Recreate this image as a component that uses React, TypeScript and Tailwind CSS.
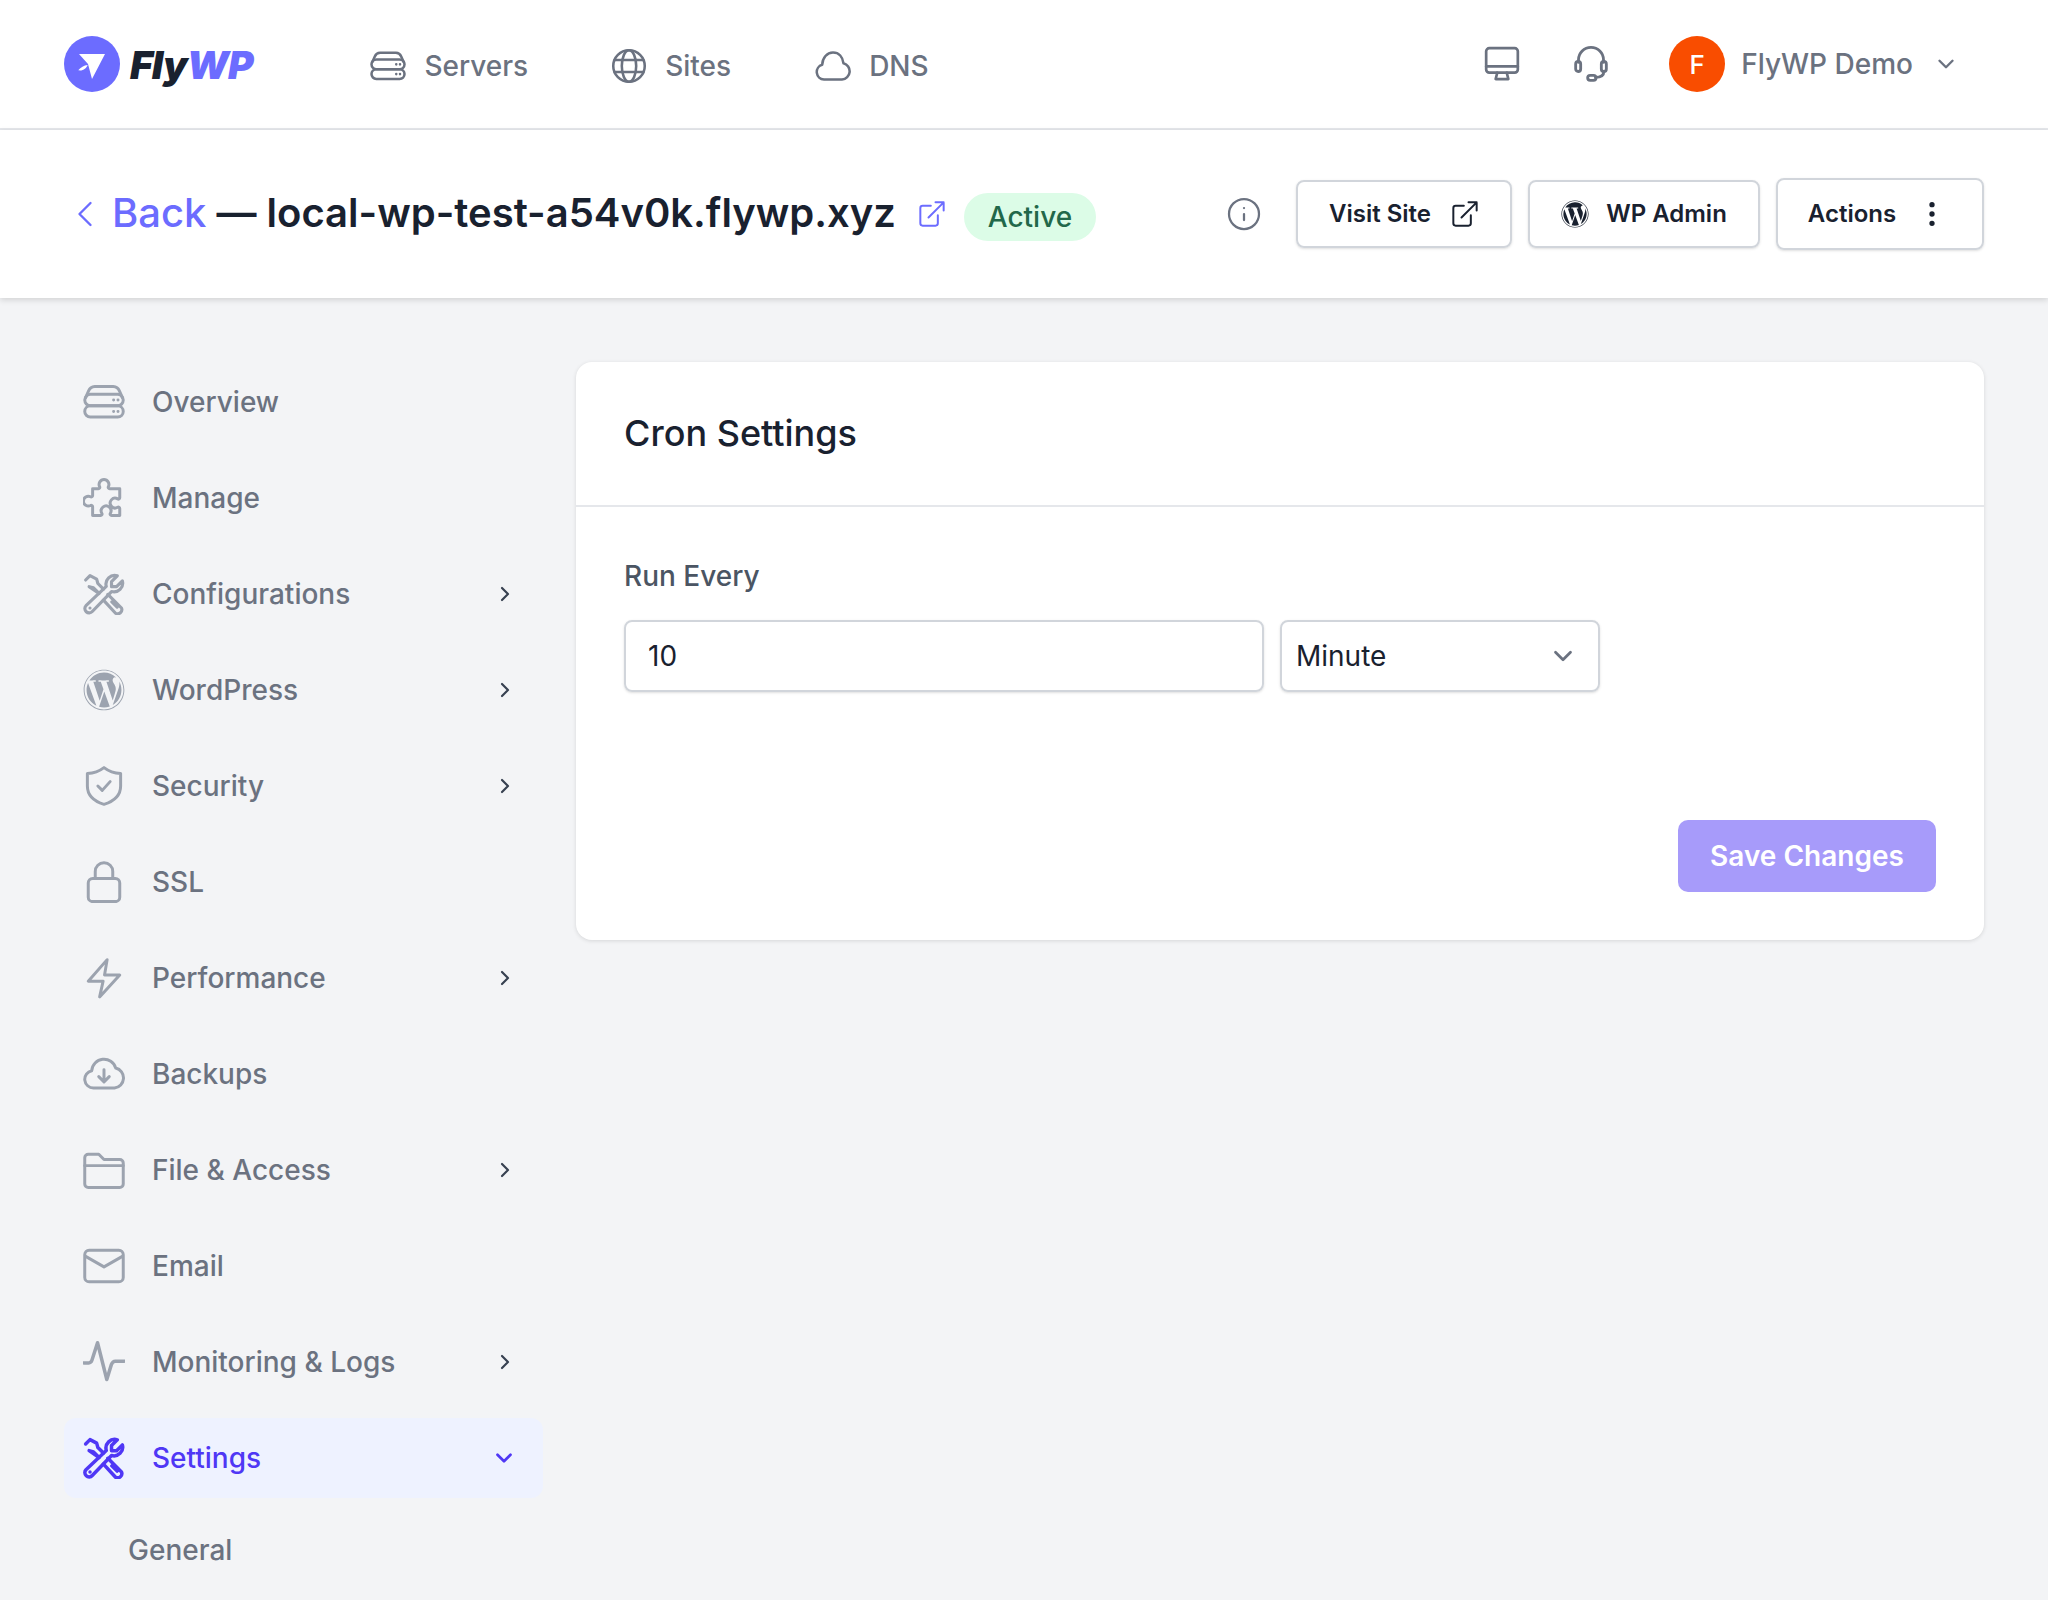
import {
  ChevronDown,
  ChevronLeft,
  ChevronRight,
  EllipsisVertical,
  Info,
} from "lucide-react";
import { FaWordpress } from "react-icons/fa";
import type { ReactNode } from "react";

function Icon({ className, children, sw = 1.7 }: { className?: string; children: ReactNode; sw?: number }) {
  return (
    <svg
      viewBox="0 0 24 24"
      fill="none"
      stroke="currentColor"
      strokeWidth={sw}
      strokeLinecap="round"
      strokeLinejoin="round"
      className={className}
    >
      {children}
    </svg>
  );
}

const ServerIcon = ({ className }: { className?: string }) => (
  <Icon className={className}>
    <path d="M1.500 9.500 3.200 5.600A4 4 0 0 1 6.700 3.200h10.600a4 4 0 0 1 3.500 2.400L22.500 9.500" />
    <rect x="1" y="7.600" width="22" height="6.600" rx="3.300" />
    <rect x="1" y="14.200" width="22" height="6.400" rx="3.200" />
    <path d="M17.500 10.900h.01M20 10.900h.01M17.500 17.400h.01M20 17.400h.01" />
  </Icon>
);
const GlobeIcon = ({ className }: { className?: string }) => (
  <Icon className={className}>
    <circle cx="12" cy="12" r="10.500" />
    <ellipse cx="12" cy="12" rx="4.800" ry="10.500" />
    <path d="M2.500 8h19M2.500 16h19" />
  </Icon>
);
const CloudIcon = ({ className }: { className?: string }) => (
  <Icon className={className}>
    <path d="M6 21a5 5 0 0 1-1.200-9.800C5 6.500 8 3 12 3s6.500 3 7 7.200A5.500 5.500 0 0 1 18 21Z" />
  </Icon>
);
const MonitorIcon = ({ className }: { className?: string }) => (
  <Icon className={className}>
    <rect x="2" y="2" width="20" height="15.500" rx="2" />
    <path d="M2 13.500h20M9 17.500 8 21.500h8l-1-4" />
  </Icon>
);
const HeadsetIcon = ({ className }: { className?: string }) => (
  <Icon className={className}>
    <path d="M4.500 11V9.500a7.500 7.500 0 0 1 15 0V11" />
    <rect x="2.800" y="10.500" width="3" height="6" rx="1.500" />
    <rect x="18.200" y="10.500" width="3" height="6" rx="1.500" />
    <path d="M19.700 16.500c0 2.500-2 3.500-5 3.500" />
    <rect x="10" y="18.800" width="5" height="3" rx="1.500" />
  </Icon>
);
const PuzzleIcon = ({ className }: { className?: string }) => (
  <Icon className={className}>
    <path d="M9.500 5.500a2.800 2.800 0 1 1 5 0c-.3.600.1 1.200.7 1.200H21v5.200c0 .600-.7 1-1.200.600a2.800 2.800 0 1 0 0 4.800c.5-.3 1.200 0 1.200.7v4h-4.700c-.6 0-1-.7-.7-1.200a2.800 2.800 0 1 0-4.800 0c.3.500-.1 1.200-.7 1.200H5.500v-5c0-.6-.7-1-1.200-.7a2.800 2.800 0 1 1 0-5c.5.300 1.200-.1 1.200-.7V6.700h3.300c.6 0 1-.6.700-1.200Z" />
  </Icon>
);
const ToolsIcon = ({ className, sw = 1.8 }: { className?: string; sw?: number }) => (
  <Icon className={className} sw={sw}>
    <path d="M1.700 18.700 13.300 7.700A5 5 0 0 1 19.600 1.600L16.300 4.900V7.800H19.200L22.500 4.500A5 5 0 0 1 16.300 10.600L5.300 22A2.400 2.400 0 0 1 1.700 18.700Z" />
    <path d="M1.500 4 4 1.500 7.800 3.500 8.500 6l3.200 3.200M9.200 11.700 6 8.500 3.500 7.800Z" />
    <path d="M14.200 12.200 22 20a2.400 2.400 0 0 1-3.400 3L11.700 15.500M16.500 16.500l3 3" />
    <path d="M4 20h.01" />
  </Icon>
);
const ShieldIcon = ({ className }: { className?: string }) => (
  <Icon className={className}>
    <path d="M12 1.500c3 2.300 6 3.200 9.500 3.400V12c0 5.500-4 8.800-9.500 10.500C6.500 20.800 2.500 17.500 2.500 12V4.900C6 4.700 9 3.800 12 1.500Z" />
    <path d="m8.500 12 2.500 2.500 4.500-5" />
  </Icon>
);
const LockIcon = ({ className }: { className?: string }) => (
  <Icon className={className}>
    <rect x="3" y="10" width="18" height="13.200" rx="2.500" />
    <path d="M7 10V6a5 5 0 0 1 10 0v4" />
  </Icon>
);
const BoltIcon = ({ className }: { className?: string }) => (
  <Icon className={className}>
    <path d="M13.800 1.500 3 13.800h8.500l-2 9L21 10.300h-8.700Z" />
  </Icon>
);
const BackupIcon = ({ className }: { className?: string }) => (
  <Icon className={className}>
    <path d="M6 20a5 5 0 0 1-1-9.900 7 7 0 0 1 13.700-1.500A5.800 5.800 0 0 1 18 20Z" />
    <path d="M12 9.500v6.500M9 13.500l3 3 3-3" />
  </Icon>
);
const FolderIcon = ({ className }: { className?: string }) => (
  <Icon className={className}>
    <path d="M1 8V5a2 2 0 0 1 2-2h6l3 3h9a2 2 0 0 1 2 2v12a2 2 0 0 1-2 2H3a2 2 0 0 1-2-2Z" />
    <path d="M1 9.500h22" />
  </Icon>
);
const MailIcon = ({ className }: { className?: string }) => (
  <Icon className={className}>
    <rect x="1" y="3" width="22" height="18" rx="2.500" />
    <path d="m1.500 6.500 10.500 6 10.500-6" />
  </Icon>
);
const PulseIcon = ({ className }: { className?: string }) => (
  <Icon className={className} sw={2}>
    <path d="M.500 12.500h2.800c1 0 1.500-.6 1.800-1.500L8.300 1l5.300 21 2.600-8.500c.5-1.500 1.300-2 2.300-2h5" />
  </Icon>
);
const ExternalIcon = ({ className }: { className?: string }) => (
  <Icon className={className} sw={1.700}>
    <path d="M11 5H4a2 2 0 0 0-2 2v13a2 2 0 0 0 2 2h11a2 2 0 0 0 2-2v-7" />
    <path d="M9 15 22 2M15 2h7v7" />
  </Icon>
);

const navItems = [
  { label: "Servers", icon: ServerIcon, gap: "mr-[83px]" },
  { label: "Sites", icon: GlobeIcon, gap: "mr-[84px]" },
  { label: "DNS", icon: CloudIcon, gap: "" },
];

const sideItems = [
  { label: "Overview", icon: ServerIcon },
  { label: "Manage", icon: PuzzleIcon },
  { label: "Configurations", icon: ToolsIcon, more: true },
  { label: "WordPress", icon: FaWordpress, more: true },
  { label: "Security", icon: ShieldIcon, more: true },
  { label: "SSL", icon: LockIcon },
  { label: "Performance", icon: BoltIcon, more: true },
  { label: "Backups", icon: BackupIcon },
  { label: "File & Access", icon: FolderIcon, more: true },
  { label: "Email", icon: MailIcon },
  { label: "Monitoring & Logs", icon: PulseIcon, more: true },
];

function Logo() {
  return (
    <div className="flex items-center gap-[10px]">
      <div className="flex h-[56px] w-[56px] items-center justify-center rounded-full bg-[#6c6cff]">
        <svg viewBox="0 0 24 24" className="h-[30px] w-[30px] fill-white">
          <path d="M1.600 4H22.400L12 24 8.800 12Z" />
          <path d="M1 17c2-2.500 4.500-4 7.500-4.300-.8 2.700-3.800 5-7.500 4.300Z" />
        </svg>
      </div>
      <div className="text-[39px] leading-none font-black tracking-[-1px] text-[#19212f] italic">
        Fly<span className="text-[#6c6cff]">WP</span>
      </div>
    </div>
  );
}

export default function App() {
  return (
    <div className="h-[1600px] w-[2048px] overflow-hidden bg-[#f3f4f6] font-['Inter',sans-serif]">
      {/* Top nav */}
      <header className="flex h-[130px] items-center border-b-2 border-[#e5e7eb] bg-white pr-[89px] pl-[64px]">
        <Logo />
        <nav className="mt-[3px] ml-[118px] flex items-center text-[28px] font-medium text-[#6b7280]">
          {navItems.map((item) => (
            <a key={item.label} className={`flex items-center gap-[18px] ${item.gap}`}>
              <item.icon className="h-[36px] w-[36px]" />
              {item.label}
            </a>
          ))}
        </nav>
        <div className="ml-auto flex items-center text-[#6b7280]">
          <MonitorIcon className="mr-[50px] h-[38px] w-[38px]" />
          <HeadsetIcon className="mr-[58px] h-[40px] w-[40px]" />
          <div className="mr-[16px] flex h-[56px] w-[56px] items-center justify-center rounded-full bg-[#f94d00] text-[26px] font-medium text-white">
            F
          </div>
          <span className="mr-[20px] text-[28px] font-medium">FlyWP Demo</span>
          <ChevronDown className="h-[26px] w-[26px]" strokeWidth={2.200} />
        </div>
      </header>

      {/* Site bar */}
      <div className="flex h-[168px] items-center bg-white pr-[64px] pl-[63px] shadow-[0_2px_6px_rgba(0,0,0,0.14)]">
        <ChevronLeft className="mr-[5px] h-[44px] w-[44px] text-[#6c6cff]" strokeWidth={1.300} />
        <h1 className="-mt-[2px] text-[40px] font-semibold text-[#19212f]">
          <span className="font-medium text-[#6c6cff]">Back</span> — local-wp-test-a54v0k.flywp.xyz
        </h1>
        <ExternalIcon className="ml-[22px] h-[28px] w-[28px] text-[#6c6cff]" />
        <span className="mt-[5px] ml-[18px] flex h-[48px] w-[132px] items-center justify-center rounded-full bg-[#dcfce7] text-[28px] font-medium text-[#22684a]">
          Active
        </span>
        <div className="ml-auto flex items-center">
          <Info className="mr-[34px] h-[36px] w-[36px] text-[#6b7280]" strokeWidth={1.500} />
          <button className="mr-[16px] flex h-[68px] w-[216px] items-center justify-center gap-[20px] rounded-[8px] border-2 border-[#d1d5db] text-[24px] font-semibold text-[#19212f] shadow-sm">
            Visit Site
            <ExternalIcon className="h-[28px] w-[28px]" />
          </button>
          <button className="mr-[16px] flex h-[68px] w-[232px] items-center justify-center gap-[17px] rounded-[8px] border-2 border-[#d1d5db] text-[24px] font-semibold text-[#19212f] shadow-sm">
            <FaWordpress className="h-[28px] w-[28px]" />
            WP Admin
          </button>
          <button className="flex h-[72px] w-[208px] items-center justify-center gap-[20px] rounded-[8px] border-2 border-[#d1d5db] pr-[4px] text-[24px] font-semibold text-[#19212f] shadow-sm">
            Actions
            <EllipsisVertical className="h-[32px] w-[32px]" strokeWidth={2} />
          </button>
        </div>
      </div>

      <div className="flex gap-[33px] pt-[64px] pr-[64px] pl-[64px]">
        {/* Sidebar */}
        <aside className="flex w-[479px] shrink-0 flex-col gap-[16px]">
          {sideItems.map((item) => (
            <a key={item.label} className="flex h-[80px] items-center pr-[26px] pl-[19px] text-[28px] font-medium text-[#6b7280]">
              <span className="mr-[27px] flex w-[42px] justify-center text-[#9ca3af]">
                <item.icon className="h-[42px] w-[42px]" />
              </span>
              {item.label}
              {item.more && <ChevronRight className="ml-auto h-[24px] w-[24px] text-[#374151]" strokeWidth={2.200} />}
            </a>
          ))}
          <a className="flex h-[80px] items-center rounded-[12px] bg-[#eef2ff] pr-[26px] pl-[19px] text-[28px] font-medium text-[#4f37f5]">
            <ToolsIcon className="mr-[27px] h-[42px] w-[42px]" sw={2} />
            Settings
            <ChevronDown className="ml-auto h-[26px] w-[26px]" strokeWidth={2.500} />
          </a>
          <a className="mt-[4px] flex h-[64px] items-center pl-[64px] text-[28px] font-medium text-[#6b7280]">General</a>
        </aside>

        {/* Card */}
        <main className="h-[578px] flex-1 rounded-[16px] bg-white shadow-[0_1px_4px_rgba(0,0,0,0.12)]">
          <div className="flex h-[145px] items-center border-b-2 border-[#e5e7eb] px-[48px] pb-[2px]">
            <h2 className="text-[36px] font-medium text-[#19212f]">Cron Settings</h2>
          </div>
          <div className="px-[48px] pt-[49px]">
            <label className="block text-[28px] leading-[40px] font-medium text-[#4b5563]">Run Every</label>
            <div className="mt-[24px] flex gap-[16px]">
              <div className="flex h-[72px] w-[640px] items-center rounded-[8px] border-2 border-[#d1d5db] px-[22px] text-[28px] text-[#19212f] shadow-sm">
                10
              </div>
              <div className="flex h-[72px] w-[320px] items-center justify-between rounded-[8px] border-2 border-[#d1d5db] pr-[20px] pl-[14px] text-[28px] text-[#19212f] shadow-sm">
                Minute
                <ChevronDown className="h-[30px] w-[30px] text-[#6b7280]" strokeWidth={2.200} />
              </div>
            </div>
            <div className="mt-[128px] flex justify-end">
              <button className="h-[72px] w-[258px] rounded-[10px] bg-[#a79bfa] text-[28px] font-semibold text-white">
                Save Changes
              </button>
            </div>
          </div>
        </main>
      </div>
    </div>
  );
}
